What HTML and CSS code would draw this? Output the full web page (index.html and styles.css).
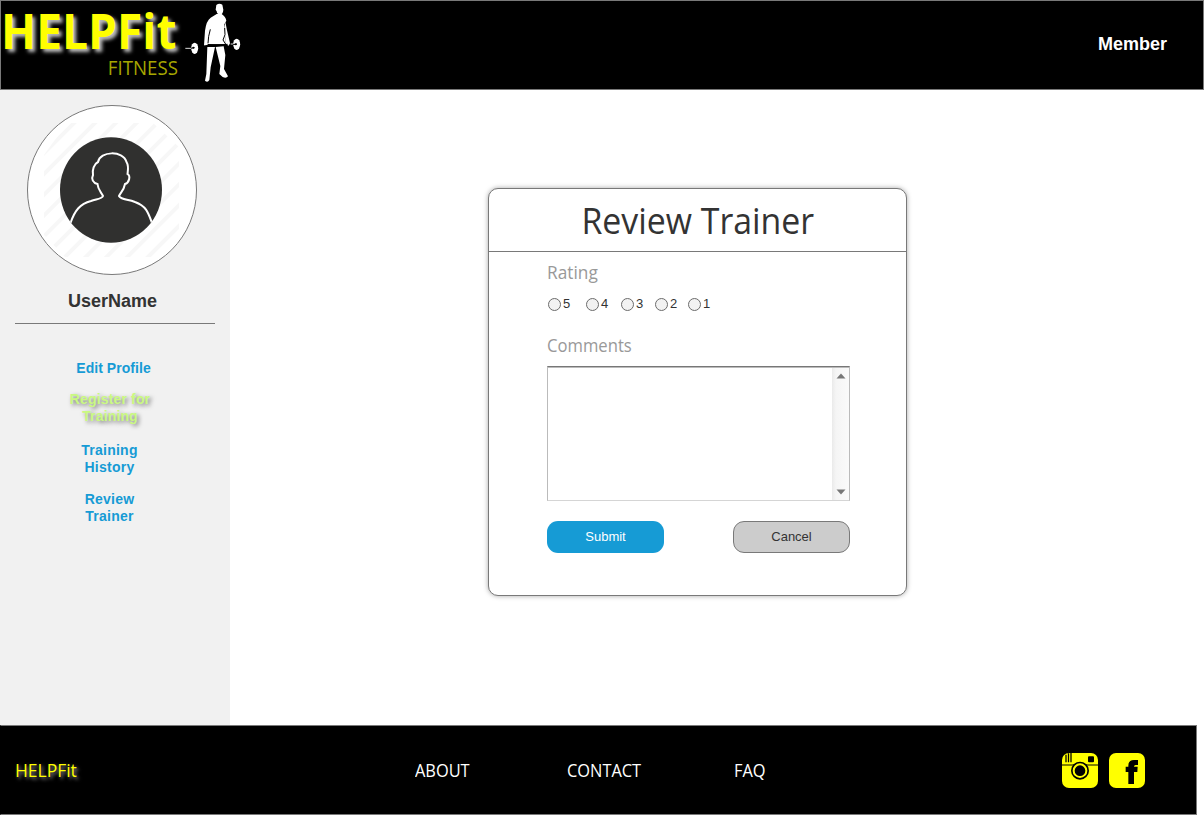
FILE: index.html
```html
<!DOCTYPE html>
<html lang="en">
<head>
<meta charset="utf-8">
<title>HELPFit - Review Trainer</title>
<link rel="stylesheet" href="styles.css">
</head>
<body>
<header class="header">
  <div class="brand">
    <div class="brand-text">
      <div class="brand-name">HELPFit</div>
      <div class="brand-sub">FITNESS</div>
    </div>
    <svg class="lifter" width="70" height="88" viewBox="0 0 210 264">
      <g fill="#fff">
        <path d="M109 15 Q118 8 127 14 L130 29 Q129 42 121 44 Q111 44 110 34 L107 29Z"/>
        <path d="M110 42 L125 42 Q137 50 139 62 L133 73 L138 133 L83 132 L82 137 L72 136 L75 92 Q79 62 92 53Z"/>
        <path d="M136 65 L141 91 L150 130 L146 137 L138 133 L133 87Z"/>
        <path d="M82 141 L105 141 L92 202 L88 240 Q83 249 75 242 L79 222 Z"/>
        <path d="M107 141 L131 139 L136 165 L132 207 L144 229 Q139 236 128 231 L118 222 L121 198Z"/>
        <ellipse cx="44" cy="145" rx="10.500" ry="17"/>
        <ellipse cx="170" cy="133" rx="10.500" ry="17"/>
      </g>
      <g fill="none" stroke="#000" stroke-width="3">
        <path d="M84 130 L86 109 L91 88 M134 84 L135 104 L129 120 L138 134 M76 137 L143 133 M32 145 L44 143 M158 134 L171 132"/>
      </g>
      <path d="M16 145 L33 145 M152 132 L160 132" fill="none" stroke="#ddd" stroke-width="3"/>
      <circle cx="40" cy="143" r="3"/><circle cx="167" cy="133" r="3"/>
    </svg>
  </div>
  <div class="member">Member</div>
</header>
<div class="middle">
  <aside class="sidebar">
    <svg class="avatar" width="170" height="170" viewBox="0 0 170 170">
      <defs>
        <pattern id="stripes" width="14.7" height="14.7" patternUnits="userSpaceOnUse" patternTransform="rotate(45)">
          <rect width="4" height="14.7" fill="#f7f7f7"/>
        </pattern>
        <clipPath id="disc"><ellipse cx="84" cy="85" rx="51" ry="53"/></clipPath>
      </defs>
      <circle cx="85" cy="85" r="84.5" fill="#fff" stroke="#797979"/>
      <path d="M40 18 H126 L152 42 V128 L130 152 H38 L17 130 V50Z" fill="url(#stripes)"/>
      <ellipse cx="84" cy="85" rx="51" ry="52.7" fill="#30302f"/>
      <path clip-path="url(#disc)" d="M43.500 118 C48 105 53 99 64 96 C70 94 75 94 76 91 C74 87 71 85 70.500 79 C66 78 64 74 66 70 C65 65 67 59 71 57 C73 46 96 45 99.500 57 C102 61 101 65 100.500 69 C104 71 102 78 98 79 C97 85 94 87 92 91 C94 95 101 94 108 97 C119 101 121 107 125 118" fill="none" stroke="#fff" stroke-width="2"/>
    </svg>
    <div class="username">UserName</div>
    <nav class="side-nav">
      <a class="edit">Edit Profile</a>
      <a class="register">Register for<br>Training</a>
      <a>Training<br>History</a>
      <a>Review<br>Trainer</a>
    </nav>
  </aside>
  <main class="main">
    <form class="card">
      <h1 class="title"><span>Review Trainer</span></h1>
      <div class="fields">
        <div class="label rating">Rating</div>
        <div class="ratings">
          <label><i class="dot"></i>5</label>
          <label><i class="dot"></i>4</label>
          <label><i class="dot"></i>3</label>
          <label><i class="dot"></i>2</label>
          <label><i class="dot"></i>1</label>
        </div>
        <div class="label comments">Comments</div>
        <div class="textarea">
          <div class="scroll">
            <svg width="10" height="6" viewBox="0 0 10 6"><path d="M0.5 5.5 L5 0.5 L9.5 5.5Z" fill="#777"/></svg>
            <svg class="down" width="10" height="6" viewBox="0 0 10 6"><path d="M0.5 0.5 L5 5.5 L9.5 0.5Z" fill="#777"/></svg>
          </div>
        </div>
        <div class="buttons">
          <button type="button" class="btn submit">Submit</button>
          <button type="button" class="btn cancel">Cancel</button>
        </div>
      </div>
    </form>
  </main>
</div>
<footer class="footer">
  <span class="foot-brand">HELPFit</span>
  <span class="about">ABOUT</span>
  <span class="contact">CONTACT</span>
  <span class="faq">FAQ</span>
  <div class="social">
    <svg width="36" height="35" viewBox="0 0 108 105">
      <rect width="108" height="105" rx="21" fill="#ff0"/>
      <path d="M12 5 V28 M19.500 1 V28 M27 0 V28" stroke="#000" stroke-width="3.800"/>
      <rect x="78" y="10" width="18" height="18" rx="3"/>
      <path d="M0 36 H108" stroke="#000" stroke-width="3"/>
      <circle cx="54" cy="53" r="27"/>
      <circle cx="54" cy="53" r="19" fill="none" stroke="#ff0" stroke-width="6"/>
    </svg>
    <svg width="36" height="35" viewBox="0 0 108 105">
      <rect width="108" height="105" rx="21" fill="#ff0"/>
      <path d="M58 93 V57 H50 V41 H58 V38 Q58 21 75 21 H87 V36 H80 Q75 36 75 41 H86 L85 57 H75 V93Z"/>
    </svg>
  </div>
</footer>
</body>
</html>
```
FILE: styles.css
```css
* { box-sizing: border-box; }
body { margin: 0; width: 1204px; height: 815px; background: #fff; color: #333; font-family: "Liberation Sans", Arial, sans-serif; overflow: hidden; }
.header { display: flex; justify-content: space-between; height: 90px; background: #000; border: 1px solid #797979; }
.brand { display: flex; }
.brand-text { width: 179px; font-family: "Open Sans", sans-serif; }
.brand-name { height: 57px; line-height: 59px; font-size: 48px; font-weight: 700; color: #ff0; white-space: nowrap; text-shadow: 3px 3px 4px rgba(255,255,255,.75); transform: scaleX(.96); transform-origin: left; }
.brand-sub { height: 20px; line-height: 20px; font-size: 20px; color: #a6a600; text-align: right; padding-right: 2px; transform: scaleX(.935); transform-origin: 177px 50%; }
.lifter { display: block; margin-top: -1px; }
.member { padding: 33px 36px 0 0; font-size: 18px; line-height: 21px; font-weight: 700; color: #fff; }
.middle { display: flex; height: 635px; }
.sidebar { width: 230px; padding: 15px; background: #f1f1f1; }
.avatar { display: block; margin-left: 12px; }
.username { height: 49px; padding: 16px 5px 0 0; border-bottom: 1px solid #797979; text-align: center; font-size: 18px; line-height: 21px; font-weight: 700; }
.side-nav { display: flex; flex-direction: column; gap: 15px; padding-top: 36px; text-align: center; font-size: 14px; line-height: 17px; font-weight: 700; letter-spacing: .25px; color: #169bd5; }
.side-nav a { padding-right: 11px; }
.side-nav .edit { padding-right: 3px; margin-bottom: -1px; letter-spacing: .05px; }
.side-nav .register { padding-right: 10px; margin-bottom: 2px; letter-spacing: .15px; color: #caf982; text-shadow: 2px 2px 4px rgba(0,0,0,.5); }
.main { flex: 1; padding: 98px 0 0 258px; }
.card { width: 419px; height: 408px; background: #fff; border: 1px solid #797979; border-radius: 10px; box-shadow: 0 0 5px rgba(0,0,0,.35); }
.title { height: 63px; margin: 0; border-bottom: 1px solid #797979; font: 400 36px/64px "Open Sans", sans-serif; text-align: center; white-space: nowrap; }
.title span { display: inline-block; transform: scaleX(.94); }
.fields { padding: 9px 56px 0 58px; }
.label { height: 22px; font: 18px/22px "Open Sans", sans-serif; color: #999; transform: scaleX(.925); transform-origin: left; }
.rating { transform: scaleX(.96); }
.ratings { display: flex; height: 16px; margin-top: 13px; padding-left: 1px; font-size: 13px; line-height: 16px; }
.ratings label { display: flex; align-items: center; gap: 2px; width: 34px; }
.ratings label:nth-child(1) { width: 38px; }
.ratings label:nth-child(2) { width: 35px; }
.ratings label:nth-child(4) { width: 33px; }
.dot { width: 13px; height: 13px; border: 1px solid #6c6c6c; border-radius: 50%; background: #f2f2f2; margin-top: 1px; }
.comments { margin-top: 22px; }
.textarea { display: flex; justify-content: flex-end; height: 135px; margin-top: 10px; border: 1px solid #bbb; border-top-color: #777; border-bottom-color: #d5d5d5; box-shadow: inset 0 1px #bbb; }
.scroll { display: flex; flex-direction: column; justify-content: space-between; align-items: center; width: 17px; margin-top: 1px; padding: 5px 0 5px; background: linear-gradient(90deg, #eaeaea, #f5f5f5 4px, #fafafa); }
.scroll svg { display: block; }
.down { margin-left: 1px; }
.buttons { display: flex; justify-content: space-between; margin-top: 20px; }
.btn { width: 117px; height: 32px; padding: 0 0 2px; border-radius: 11px; font: 13px "Liberation Sans", Arial, sans-serif; }
.submit { border: 0; background: #169bd5; color: #fff; }
.cancel { border: 1px solid #797979; background: #ccc; color: #333; }
.footer { display: grid; grid-template-columns: 400px 152px 167px 328px 1fr; align-items: center; width: 1197px; height: 90px; padding-left: 14px; background: #000; border: 1px solid #797979; border-left-color: #000; color: #fff; font: 18px "Open Sans", sans-serif; }
.footer span { transform: scaleX(.91); transform-origin: left; }
.footer .foot-brand { color: #ff0; text-shadow: 2px 2px 4px rgba(255,255,255,.6); transform: scaleX(.97); }
.social { display: flex; gap: 11px; }
.social svg { display: block; }
```
